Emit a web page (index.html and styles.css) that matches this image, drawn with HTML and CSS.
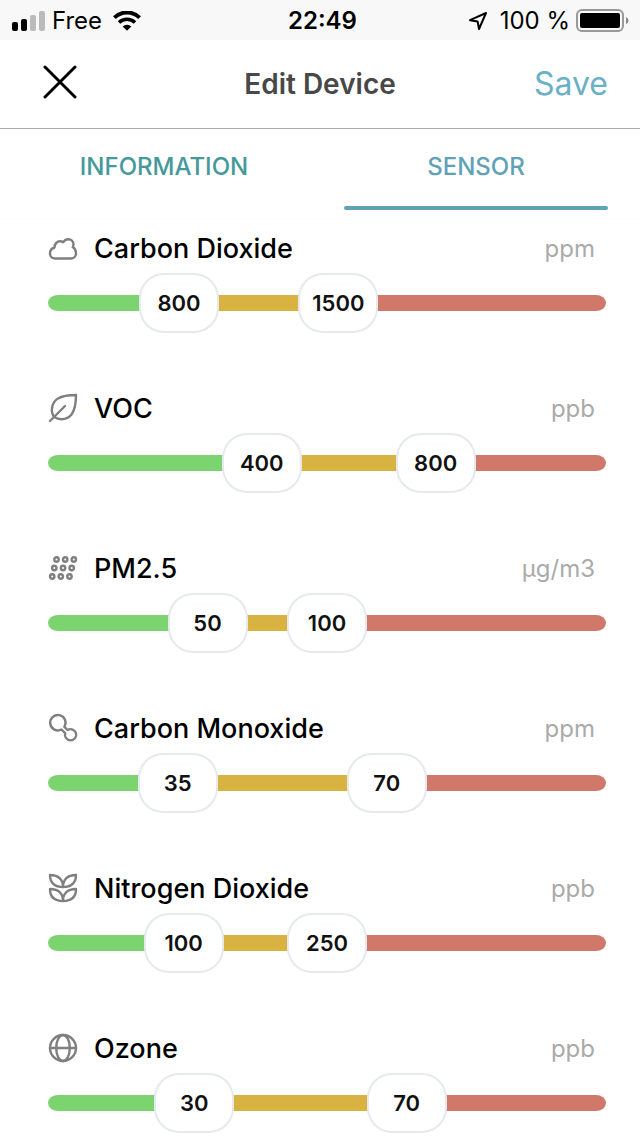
FILE: index.html
```html
<!DOCTYPE html>
<html lang="en">
<head>
<meta charset="utf-8">
<meta name="viewport" content="width=device-width, initial-scale=1">
<title>Edit Device</title>
<link rel="stylesheet" href="styles.css">
</head>
<body>
<div class="status">
  <div class="status-side">
    <svg class="signal" width="34" height="20" viewBox="0 0 34 20" aria-hidden="true">
      <rect x="0" y="11" width="6" height="9" rx="2"/>
      <rect x="9" y="8" width="6" height="12" rx="2"/>
      <rect class="weak" x="18" y="4" width="6" height="16" rx="2"/>
      <rect class="weak" x="27" y="0" width="6" height="20" rx="2"/>
    </svg>
    <span class="carrier">Free</span>
    <svg class="wifi" width="28" height="20" viewBox="0 0 28 20" aria-hidden="true">
      <path d="M1.400 6.600a18 18 0 0 1 25.200 0" fill="none" stroke="#000" stroke-width="4"/>
      <path d="M6 11.500a11.600 11.600 0 0 1 16 0" fill="none" stroke="#000" stroke-width="3.600"/>
      <path d="M9.700 15.400a6.300 6.300 0 0 1 8.600 0L14 19.800z"/>
    </svg>
  </div>
  <time class="clock">22:49</time>
  <div class="status-side status-end">
    <svg width="20" height="20" viewBox="0 0 20 20" aria-hidden="true">
      <path d="M18 2 2 9.200l7.600 1.200L11 18z" fill="none" stroke="#000" stroke-width="2" stroke-linejoin="round"/>
    </svg>
    <span class="charge">100 %</span>
    <svg class="battery" width="53" height="24" viewBox="0 0 53 24" aria-hidden="true">
      <rect x="1" y="1" width="46" height="21" rx="5" fill="none" stroke="#999" stroke-width="2"/>
      <rect x="4" y="4" width="40" height="15" rx="2"/>
      <path d="M50 8q2.500 1 2.500 3.500T50 15z" fill="#8a8a8a"/>
    </svg>
  </div>
</div>

<header class="header">
  <button class="close" type="button" aria-label="Close">
    <svg width="34" height="34" viewBox="0 0 34 34" aria-hidden="true"><path d="M2 2l30 30M32 2 2 32" fill="none" stroke="#000" stroke-width="3" stroke-linecap="round"/></svg>
  </button>
  <h1 class="title">Edit Device</h1>
  <button class="save" type="button">Save</button>
</header>

<nav class="tabs" role="tablist">
  <button class="tab" type="button" role="tab" aria-selected="false">INFORMATION</button>
  <button class="tab" type="button" role="tab" aria-selected="true">SENSOR</button>
</nav>

<main class="sensors">
  <section class="sensor">
    <div class="sensor-head">
      <svg class="icon" viewBox="0 0 28 28" aria-hidden="true"><path d="M6 24.500a5 5 0 0 1-5-5c0-2.900 1.900-5.200 4.500-6 0-3.300 2.300-6.300 5.600-6.300 1.300 0 2.300.4 3.200 1 1.200-1.800 2.800-2.900 5-2.900 3.100 0 5.200 2.400 5.200 5.100 0 1-.3 1.900-.8 2.700 2.100 1.300 3.300 3.600 3.300 6.100 0 3-2.100 5.300-5 5.300z"/></svg>
      <h2 class="name">Carbon Dioxide</h2><span class="unit">ppm</span>
    </div>
    <div class="range" style="--low: .1905; --high: .5238">
      <input type="range" aria-label="Carbon Dioxide, lower limit" min="400" max="2500" value="800"><output>800</output>
      <input type="range" aria-label="Carbon Dioxide, upper limit" min="400" max="2500" value="1500"><output>1500</output>
    </div>
  </section>
  <section class="sensor">
    <div class="sensor-head">
      <svg class="icon" viewBox="0 0 28 28" aria-hidden="true"><path d="M1 27 16 12M5 23C1 17 3 8 9 4.500 14 1.500 21 1 27 1c0 6-.5 14-4.500 19.500C18 26 10.500 26.500 5 23z"/></svg>
      <h2 class="name">VOC</h2><span class="unit">ppb</span>
    </div>
    <div class="range" style="--low: .3636; --high: .7273">
      <input type="range" aria-label="VOC, lower limit" min="0" max="1100" value="400"><output>400</output>
      <input type="range" aria-label="VOC, upper limit" min="0" max="1100" value="800"><output>800</output>
    </div>
  </section>
  <section class="sensor">
    <div class="sensor-head">
      <svg class="icon" viewBox="0 0 28 28" aria-hidden="true"><g><circle cx="7.500" cy="5.500" r="2.200"/><circle cx="16.200" cy="5.500" r="2.200"/><circle cx="24.800" cy="5.500" r="2.200"/><circle cx="5.300" cy="14" r="2.200"/><circle cx="14" cy="14" r="2.200"/><circle cx="22.700" cy="14" r="2.200"/><circle cx="3.200" cy="22.500" r="2.200"/><circle cx="11.800" cy="22.500" r="2.200"/><circle cx="20.500" cy="22.500" r="2.200"/></g></svg>
      <h2 class="name">PM2.5</h2><span class="unit">µg/m3</span>
    </div>
    <div class="range" style="--low: .25; --high: .5">
      <input type="range" aria-label="PM2.5, lower limit" min="0" max="200" value="50"><output>50</output>
      <input type="range" aria-label="PM2.5, upper limit" min="0" max="200" value="100"><output>100</output>
    </div>
  </section>
  <section class="sensor">
    <div class="sensor-head">
      <svg class="icon" viewBox="0 0 28 28" aria-hidden="true"><path d="M15.400 12.800A7.700 7.700 0 1 0 12.500 15.500L16.200 19.200A5.600 5.600 0 1 0 18.600 16z"/></svg>
      <h2 class="name">Carbon Monoxide</h2><span class="unit">ppm</span>
    </div>
    <div class="range" style="--low: .1875; --high: .625">
      <input type="range" aria-label="Carbon Monoxide, lower limit" min="20" max="100" value="35"><output>35</output>
      <input type="range" aria-label="Carbon Monoxide, upper limit" min="20" max="100" value="70"><output>70</output>
    </div>
  </section>
  <section class="sensor">
    <div class="sensor-head">
      <svg class="icon" viewBox="0 0 28 28" aria-hidden="true"><path d="M14 13C14 6 10 1 1 1c0 8 5 12 13 12C14 6 18 1 27 1c0 8-5 12-13 12zM14 27c0-7-4-12-13-12 0 8 5 12 13 12 0-7 4-12 13-12 0 8-5 12-13 12z"/></svg>
      <h2 class="name">Nitrogen Dioxide</h2><span class="unit">ppb</span>
    </div>
    <div class="range" style="--low: .2; --high: .5">
      <input type="range" aria-label="Nitrogen Dioxide, lower limit" min="0" max="500" value="100"><output>100</output>
      <input type="range" aria-label="Nitrogen Dioxide, upper limit" min="0" max="500" value="250"><output>250</output>
    </div>
  </section>
  <section class="sensor">
    <div class="sensor-head">
      <svg class="icon" viewBox="0 0 28 28" aria-hidden="true"><circle cx="14" cy="14" r="13"/><ellipse cx="14" cy="14" rx="6.800" ry="13"/><path d="M1 14h26"/></svg>
      <h2 class="name">Ozone</h2><span class="unit">ppb</span>
    </div>
    <div class="range" style="--low: .2222; --high: .6667">
      <input type="range" aria-label="Ozone, lower limit" min="10" max="100" value="30"><output>30</output>
      <input type="range" aria-label="Ozone, upper limit" min="10" max="100" value="70"><output>70</output>
    </div>
  </section>
</main>
<script src="sliders.js"></script>
</body>
</html>
```
FILE: styles.css
```css
* {
  box-sizing: border-box;
}

body {
  margin: 0;
  background: #fff;
  color: #000;
  font-family: Inter, "Liberation Sans", sans-serif;
}

button {
  padding: 0;
  border: 0;
  background: none;
  font-family: inherit;
  cursor: pointer;
}

h1,
h2 {
  margin: 0;
}

.status {
  display: grid;
  grid-template-columns: 1fr auto 1fr;
  align-items: center;
  height: 40px;
  padding: 1px 11px 0 12px;
  background: #f8f8f8;
  font-size: 24px;
  line-height: 32px;
}

.status-side {
  display: flex;
  align-items: center;
}

.status-end {
  justify-content: flex-end;
}

.signal .weak {
  fill: #bbb;
}

.carrier {
  margin: 0 11px 0 6px;
}

.clock {
  padding-left: 4px;
  font-weight: 600;
}

.charge {
  margin: 0 6px 0 12px;
}

.header {
  display: grid;
  grid-template-columns: 1fr auto 1fr;
  align-items: center;
  height: 89px;
  padding: 0 32px;
  border-bottom: 1px solid #aaa;
}

.close {
  display: flex;
  justify-self: start;
  padding: 0 0 4px 11px;
}

.title {
  color: #484848;
  font-size: 28px;
  font-weight: 600;
  line-height: 32px;
}

.save {
  justify-self: end;
  color: #6bb0c6;
  font-size: 32px;
  line-height: 40px;
}

.tabs {
  display: grid;
  grid-template-columns: 1fr 1fr;
  gap: 48px;
  height: 90px;
  padding: 0 32px 8px;
  border-bottom: 1px solid #fcfcfc;
}

.tab {
  padding-bottom: 2px;
  border-bottom: 4px solid transparent;
  color: #45999b;
  font-size: 24px;
  font-weight: 500;
  line-height: 32px;
}

.tab[aria-selected="true"] {
  position: relative;
  color: #5fa2b8;
}

.tab[aria-selected="true"]::after {
  content: "";
  position: absolute;
  right: 0;
  bottom: -4px;
  left: 0;
  height: 4px;
  border-radius: 2px;
  background: #5fa2b8;
}

.sensors {
  display: grid;
  gap: 60px;
  padding: 14px 34px 3px 48px;
}

.sensor-head {
  display: flex;
  align-items: center;
  height: 32px;
  margin-bottom: 8px;
  padding-right: 11px;
}

.icon {
  width: 28px;
  height: 28px;
  margin: 0 17px 2px 1px;
  overflow: visible;
  fill: none;
  stroke: #7f7f7f;
  stroke-width: 2.4;
  stroke-linecap: round;
  stroke-linejoin: round;
}

.name {
  flex: 1;
  font-size: 27px;
  font-weight: 500;
  line-height: 32px;
}

.unit {
  color: #aaa;
  font-size: 24px;
  line-height: 32px;
}

/* Thumb centres travel between 40px inside each end of the track. */
.range {
  --low-x: calc(40px + (100% - 80px) * var(--low));
  --high-x: calc(40px + (100% - 80px) * var(--high));
  position: relative;
  display: flex;
  align-items: center;
  height: 60px;
}

.range::before {
  content: "";
  flex: 1;
  height: 16px;
  border-radius: 10px / 8px;
  background: linear-gradient(to right, #7bd46f var(--low-x), #d8b341 var(--low-x) var(--high-x), #d07869 var(--high-x));
}

.range input {
  position: absolute;
  inset: 0;
  width: 100%;
  height: 100%;
  margin: 0;
  appearance: none;
  background: transparent;
  pointer-events: none;
}

.range input::-webkit-slider-thumb {
  width: 80px;
  height: 60px;
  appearance: none;
  background: transparent;
  cursor: pointer;
  pointer-events: auto;
}

.range output {
  position: absolute;
  left: var(--low-x);
  width: 80px;
  height: 60px;
  margin-left: -40px;
  border: 2px solid #e6e9ed;
  border-radius: 25px;
  background: #fff;
  color: #111;
  font-size: 22px;
  font-weight: 600;
  line-height: 56px;
  text-align: center;
  pointer-events: none;
}

.range output:last-child {
  left: var(--high-x);
}
```
FILE: sliders.js
```js
document.querySelectorAll(".range").forEach((range) => {
  const inputs = [...range.querySelectorAll("input")];
  const outputs = range.querySelectorAll("output");
  const names = ["--low", "--high"];

  inputs.forEach((input, i) => {
    input.addEventListener("input", () => {
      const other = Number(inputs[1 - i].value);
      const value = Number(input.value);
      input.value = i === 0 ? Math.min(value, other) : Math.max(value, other);
      outputs[i].textContent = input.value;
      range.style.setProperty(names[i], (input.value - input.min) / (input.max - input.min));
    });
  });
});
```
